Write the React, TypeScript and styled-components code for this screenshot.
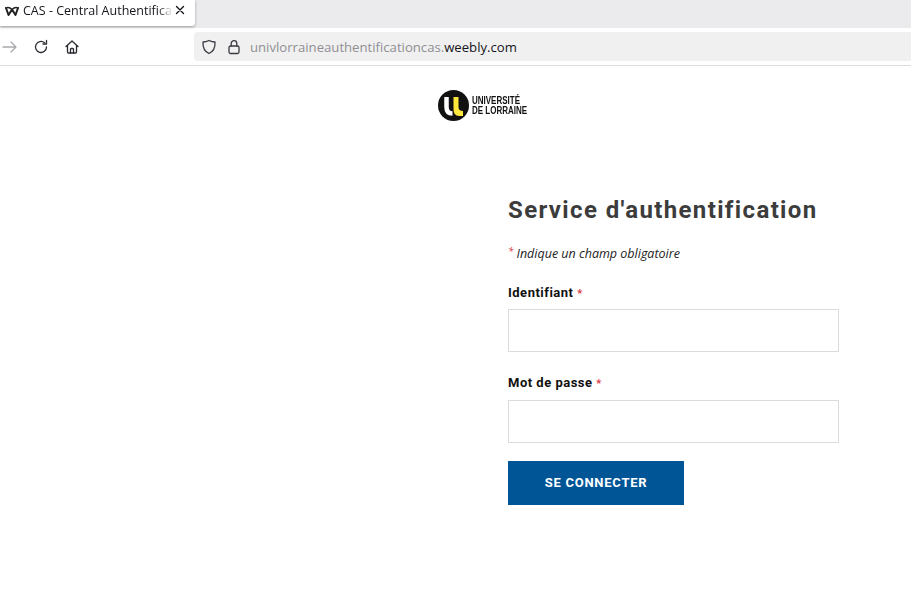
import styled, { createGlobalStyle } from "styled-components";

const GlobalStyle = createGlobalStyle`
  html, body {
    margin: 0;
    padding: 0;
    background: #fff;
  }
  body {
    font-family: "Roboto", "Liberation Sans", sans-serif;
  }
`;

const Page = styled.div`
  width: 911px;
  height: 612px;
  overflow: hidden;
`;

const TabStrip = styled.div`
  height: 28px;
  background: #ebebed;
  display: flex;
  align-items: flex-start;
`;
const Tab = styled.div`
  width: 195px;
  height: 26px;
  background: #fff;
  border-radius: 0 0 3px 0;
  box-shadow: 0 1px 3px rgba(0, 0, 0, 0.35);
  display: flex;
  align-items: center;
  padding: 0 0 4px 4px;
  box-sizing: border-box;
  font-family: "Open Sans", sans-serif;
  font-size: 12.5px;
  color: #15141a;
`;
const TabTitle = styled.span`
  margin-left: 3px;
  width: 150px;
  height: 18px;
  line-height: 18px;
  white-space: nowrap;
  overflow: hidden;
  mask-image: linear-gradient(to right, #000 135px, transparent 150px);
`;
const TabClose = styled.svg`
  margin-left: 2px;
  width: 10px;
  height: 10px;
  margin-top: -2px;
`;

const Toolbar = styled.div`
  height: 37px;
  border-bottom: 1px solid #dcdcde;
  display: flex;
  align-items: center;
`;
const NavIcon = styled.svg`
  width: 16px;
  height: 16px;
  fill: none;
  stroke: ${(props) => props.color || "#2b2a33"};
  stroke-width: 1.3;
  stroke-linecap: round;
  stroke-linejoin: round;
  flex: none;
`;
const NavGroup = styled.div`
  width: 194px;
  display: flex;
  align-items: center;
  gap: 15px;
  padding-left: 2px;
  box-sizing: border-box;
`;
const UrlBar = styled.div`
  flex: 1;
  height: 29px;
  background: #f0f0f0;
  border-radius: 4px 0 0 4px;
  display: flex;
  align-items: center;
  padding-left: 7px;
  gap: 9px;
  font-family: "Open Sans", sans-serif;
  font-size: 13.15px;
`;
const UrlText = styled.span`
  margin-left: -1px;
  color: #8f8f94;
`;
const UrlDomain = styled.span`
  color: #15141a;
`;

const Header = styled.div`
  display: flex;
  align-items: center;
  padding: 24px 0 0 438px;
  height: 31px;
  gap: 3px;
`;
const LogoText = styled.div`
  font-family: "Liberation Sans", sans-serif;
  font-weight: 700;
  font-size: 10px;
  line-height: 10px;
  color: #111;
  transform: scaleX(0.8);
  transform-origin: left center;
  white-space: nowrap;
`;

const Form = styled.form`
  margin: 74px 0 0 508px;
  width: 331px;
`;
const Title = styled.h1`
  margin: 0;
  font-family: "Roboto", sans-serif;
  font-weight: 700;
  font-size: 24px;
  line-height: 30px;
  letter-spacing: 1.37px;
  color: #3c3c3c;
  white-space: nowrap;
`;
const Required = styled.span`
  color: #d9363e;
  font-size: 11px;
  line-height: 1;
`;
const NoteMark = styled(Required)`
  font-size: 10px;
`;
const Note = styled.div`
  margin: 21px 0 -1px;
  font-family: "Open Sans", sans-serif;
  font-style: italic;
  font-size: 12.5px;
  line-height: 16px;
  color: #222;
  display: flex;
  gap: 3px;
`;
const Label = styled.label<{ $top: number; $bottom: number }>`
  display: block;
  margin-top: ${(props) => props.$top}px;
  margin-bottom: ${(props) => props.$bottom}px;
  font-family: "Roboto", sans-serif;
  font-weight: 700;
  font-size: 13px;
  line-height: 16px;
  letter-spacing: 0.5px;
  color: #111;
`;
const Field = styled.input`
  display: block;
  width: 100%;
  height: 43px;
  box-sizing: border-box;
  border: 1px solid #dcdcdc;
  background: #fff;
  outline: none;
`;
const Submit = styled.button`
  display: block;
  width: 176px;
  height: 44px;
  margin-top: 18px;
  padding-bottom: 3px;
  border: none;
  background: #005596;
  color: #fff;
  font-family: "Roboto", sans-serif;
  font-weight: 700;
  font-size: 13px;
  letter-spacing: 0.75px;
`;

export default function App() {
  return (
    <Page>
      <GlobalStyle />
      <TabStrip>
        <Tab>
          <svg width="16" height="12" viewBox="0 0 16 12" fill="none" stroke="#222" strokeWidth="2" strokeLinecap="round" strokeLinejoin="round">
            <path d="M2 3 L4.5 10 L8 4.5 L11.5 10 L14 3" />
            <path d="M2 3 Q5 1.5 8 4.5 Q11 1.5 14 3" strokeWidth="1.4" />
          </svg>
          <TabTitle>CAS - Central Authentification</TabTitle>
          <TabClose viewBox="0 0 10 10" stroke="#15141a" strokeWidth="1.4" strokeLinecap="round">
            <path d="M1.5 1.5 L8.5 8.5 M8.5 1.5 L1.5 8.5" />
          </TabClose>
        </Tab>
      </TabStrip>
      <Toolbar>
        <NavGroup>
          <NavIcon viewBox="0 0 16 16" color="#a9a9ad">
            <path d="M1 8 H14 M9 3 L14 8 L9 13" />
          </NavIcon>
          <NavIcon viewBox="0 0 16 16">
            <path d="M13.5 8 A5.5 5.5 0 1 1 11.6 3.8" />
            <path d="M13.5 1.5 V5 H10" />
          </NavIcon>
          <NavIcon viewBox="0 0 16 16">
            <path d="M2 7.5 L8 2 L14 7.5 M3.5 6.5 V13 A1 1 0 0 0 4.5 14 H11.5 A1 1 0 0 0 12.5 13 V6.5" />
            <path d="M6.5 14 V10 A1 1 0 0 1 7.5 9.5 H8.5 A1 1 0 0 1 9.5 10 V14" />
          </NavIcon>
        </NavGroup>
        <UrlBar>
          <NavIcon viewBox="0 0 16 16" color="#3a3944">
            <path d="M8 1.5 C10 2.5 12 3 14 3 C14.3 8 12.5 12.5 8 14.5 C3.5 12.5 1.7 8 2 3 C4 3 6 2.5 8 1.5 Z" />
          </NavIcon>
          <NavIcon viewBox="0 0 16 16" color="#3a3944">
            <rect x="3" y="7" width="10" height="7.5" rx="1.5" />
            <path d="M5.2 7 V4.5 A2.8 2.8 0 0 1 10.8 4.5 V7" />
          </NavIcon>
          <UrlText>
            univlorraineauthentificationcas.<UrlDomain>weebly.com</UrlDomain>
          </UrlText>
        </UrlBar>
      </Toolbar>
      <Header>
        <svg width="31" height="31" viewBox="0 0 31 31">
          <circle cx="15.5" cy="15.5" r="15.5" fill="#111" />
          <path d="M8.5 7 V17 Q8.5 23.5 14.5 23.5" fill="none" stroke="#fff" strokeWidth="4.5" />
          <path d="M15.5 7 H20.5 V17 Q20.5 21 25 21 V26 H21 Q15.5 26 15.5 19 Z" fill="#ffe83c" />
        </svg>
        <LogoText>
          UNIVERSITÉ
          <br />
          DE LORRAINE
        </LogoText>
      </Header>
      <Form>
        <Title>Service d'authentification</Title>
        <Note>
          <NoteMark>*</NoteMark>
          <span>Indique un champ obligatoire</span>
        </Note>
        <Label $top={24} $bottom={8}>
          Identifiant <Required>*</Required>
        </Label>
        <Field type="text" />
        <Label $top={23} $bottom={9}>
          Mot de passe <Required>*</Required>
        </Label>
        <Field type="password" />
        <Submit type="button">SE CONNECTER</Submit>
      </Form>
    </Page>
  );
}
